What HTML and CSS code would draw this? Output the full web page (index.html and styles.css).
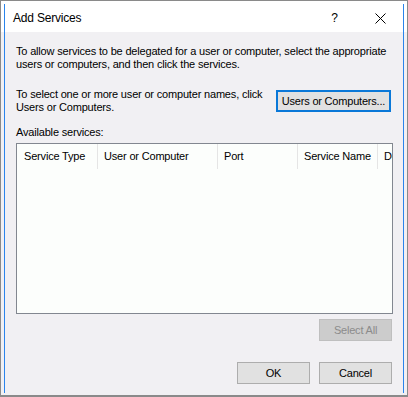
FILE: index.html
```html
<!DOCTYPE html>
<html lang="en">

<head>
    <meta charset="UTF-8">
    <title>Add Services</title>
    <link rel="stylesheet" href="styles.css">
</head>

<body>
    <div class="frame">
        <div class="window">
            <div class="titlebar">
                <span class="title">Add Services</span>
                <span class="help">?</span>
                <span class="close">
                    <svg width="11" height="11" viewBox="0 0 11 11">
                        <path d="M0.5 0.5 L10.5 10.5 M10.5 0.5 L0.5 10.5" stroke="#000" stroke-width="1" fill="none" />
                    </svg>
                </span>
            </div>

            <div class="content">
                <p class="intro">To allow services to be delegated for a user or computer, select the appropriate users or computers, and then click the services.</p>

                <div class="select-row">
                    <p>To select one or more user or computer names, click Users or Computers.</p>
                    <button class="btn default">Users or Computers...</button>
                </div>

                <div class="label">Available services:</div>

                <div class="list">
                    <div class="list-header">
                        <div class="col first">Service Type</div>
                        <div class="col wide">User or Computer</div>
                        <div class="col">Port</div>
                        <div class="col">Service Name</div>
                        <div class="col last">Domain</div>
                    </div>
                </div>

                <div class="select-all-row">
                    <button class="btn disabled">Select All</button>
                </div>

                <div class="footer">
                    <button class="btn">OK</button>
                    <button class="btn">Cancel</button>
                </div>
            </div>
        </div>
    </div>
</body>

</html>
```

FILE: styles.css
```css
body {
    margin: 0;
    font-family: "Liberation Sans", Arial, sans-serif;
    font-size: 11px;
    color: #000;
}

.frame {
    box-sizing: border-box;
    width: 408px;
    height: 397px;
    border: 1px solid #8a8a8a;
    border-bottom-width: 2px;
    background: linear-gradient(#ffffff 0, #ffffff 31px, #f1f0f3 31px);
    padding: 3px 3px 2px 3px;
}

.window {
    height: 100%;
    box-sizing: border-box;
    border-left: 1px solid #2a84ec;
    border-right: 1px solid #2a84ec;
    display: flex;
    flex-direction: column;
}

.titlebar {
    height: 28px;
    display: flex;
    align-items: center;
    padding-left: 8px;
    font-size: 12px;
}

.title {
    flex: 1;
    letter-spacing: -0.2px;
}

.help {
    font-size: 12px;
    margin-right: 37px;
}

.close {
    display: flex;
    margin-right: 17px;
    margin-top: 1px;
}

.content {
    flex: 1;
    padding: 13px 10px 0 11px;
    display: flex;
    flex-direction: column;
    letter-spacing: -0.18px;
}

p {
    margin: 0;
    line-height: 13px;
}

.select-row {
    display: flex;
    align-items: center;
    justify-content: space-between;
    margin-top: 17px;
    padding-right: 2px;
}

.select-row p {
    width: 250px;
}

.btn {
    font-family: "Liberation Sans", Arial, sans-serif;
    font-size: 11px;
    letter-spacing: -0.2px;
    color: #000;
    background: #e1e1e1;
    border: 1px solid #adadad;
    height: 22px;
    width: 73px;
    padding: 0;
    margin: 0;
}

.btn.default {
    width: 115px;
    border: 2px solid #0a78d8;
}

.btn.disabled {
    background: #cccccc;
    border-color: #bfbfbf;
    color: #8b8b8b;
}

.label {
    margin-top: 12px;
    line-height: 13px;
}

.list {
    margin-top: 4px;
    height: 171px;
    box-sizing: border-box;
    border: 1px solid #828790;
    background: #fcfefc;
    overflow: hidden;
}

.list-header {
    display: flex;
    height: 25px;
    white-space: nowrap;
}

.col {
    flex: none;
    box-sizing: border-box;
    width: 80px;
    padding-left: 6px;
    line-height: 25px;
    border-right: 1px solid #e5e5e5;
}

.col.first {
    width: 81px;
    padding-left: 7px;
}

.col.wide {
    width: 120px;
}

.col.last {
    width: 80px;
    border-right: none;
}

.select-all-row {
    display: flex;
    justify-content: flex-end;
    margin-top: 5px;
    padding-right: 1px;
}

.footer {
    display: flex;
    justify-content: flex-end;
    gap: 9px;
    margin-top: 21px;
    padding-right: 1px;
}
```
